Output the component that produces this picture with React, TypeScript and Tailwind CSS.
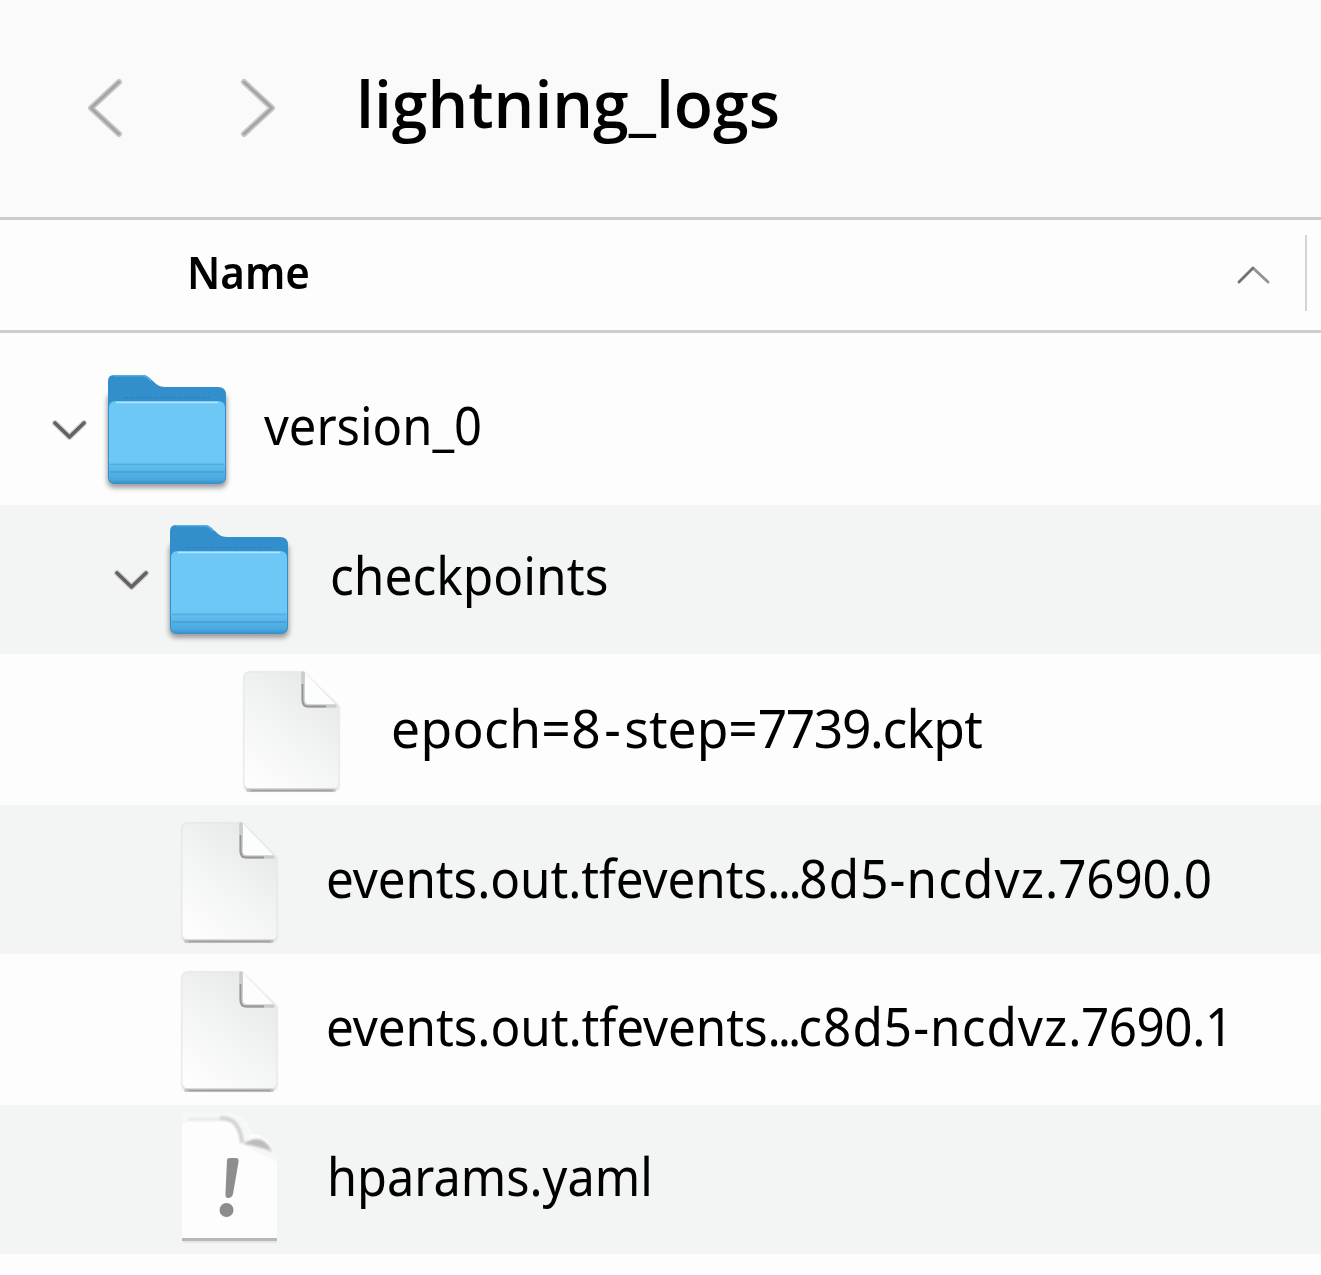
type Kind = "folder" | "file" | "yaml";
type Part = { text: string; spacing: string };

const rows: { parts: Part[]; kind: Kind; row: string; gap: string; label: string }[] = [
  { parts: [{ text: "version_0", spacing: "" }], kind: "folder", row: "h-[172px] pl-[52px] pt-[32px] bg-[#fdfdfd]", gap: "pl-[26px] pt-[30px]", label: "scale-x-[0.94]" },
  { parts: [{ text: "checkpoints", spacing: "" }], kind: "folder", row: "h-[149px] pl-[114px] pt-[10px] bg-[#f3f4f4]", gap: "pl-[30px] pt-[30px]", label: "scale-x-[0.954]" },
  {
    parts: [
      { text: "epoch=", spacing: "tracking-[0.4px]" },
      { text: "8-", spacing: "tracking-[3.6px]" },
      { text: "step=", spacing: "" },
      { text: "7739.", spacing: "tracking-[-1.4px]" },
      { text: "ckpt", spacing: "tracking-[-0.7px]" },
    ],
    kind: "file", row: "h-[151px] pl-[238px] pt-[10px] bg-[#fdfdfd]", gap: "pl-[43px] pt-[34px]", label: "scale-x-[0.99]",
  },
  {
    parts: [
      { text: "events.out.tfevents", spacing: "tracking-[-0.1px]" },
      { text: "...", spacing: "tracking-[-2.6px]" },
      { text: "8d5-ncdvz", spacing: "tracking-[1.2px]" },
      { text: ".7690.0", spacing: "tracking-[-0.1px]" },
    ],
    kind: "file", row: "h-[149px] pl-[176px] pt-[10px] bg-[#f3f4f4]", gap: "pl-[40px] pt-[33px]", label: "scale-x-[0.949]",
  },
  {
    parts: [
      { text: "events.out.tfevents", spacing: "tracking-[-0.1px]" },
      { text: "...", spacing: "tracking-[-3.1px]" },
      { text: "c8d5-ncdvz", spacing: "tracking-[1.1px]" },
      { text: ".7690.1", spacing: "tracking-[-0.5px]" },
    ],
    kind: "file", row: "h-[151px] pl-[176px] pt-[10px] bg-[#fdfdfd]", gap: "pl-[40px] pt-[32px]", label: "scale-x-[0.95]",
  },
  { parts: [{ text: "hparams.yaml", spacing: "" }], kind: "yaml", row: "h-[149px] pl-[176px] pt-[4px] bg-[#f3f4f4]", gap: "pl-[41px] pt-[37px]", label: "scale-x-[0.936]" },
];

function Disclosure() {
  return (
    <svg className="mt-[54px] h-[24px] w-[36px] shrink-0" viewBox="0 0 36 24" fill="none">
      <path d="M3 4 L17.5 18 L32 4" stroke="#b9b7b8" strokeWidth="6" strokeLinejoin="round" strokeLinecap="round" opacity="0.55" />
      <path d="M3 4 L17.5 18 L32 4" stroke="#646263" strokeWidth="3.8" strokeLinejoin="round" strokeLinecap="round" />
    </svg>
  );
}

function Folder() {
  return (
    <svg className="ml-[10px] h-[130px] w-[140px] shrink-0" viewBox="0 0 140 130">
      <defs>
        <linearGradient id="front" x1="0" y1="0" x2="0" y2="1">
          <stop offset="0" stopColor="#6dc8f6" />
          <stop offset="0.72" stopColor="#6dc8f6" />
          <stop offset="0.84" stopColor="#58b5e9" />
          <stop offset="0.94" stopColor="#4ca9df" />
          <stop offset="1" stopColor="#338fcb" />
        </linearGradient>
        <filter id="soft" x="-10%" y="-10%" width="120%" height="125%">
          <feGaussianBlur stdDeviation="2.4" />
        </filter>
      </defs>
      <rect x="9" y="28" width="120" height="95" rx="7" fill="#8b8888" opacity="0.8" filter="url(#soft)" />
      <path d="M10 16 Q10 10 16 10 H45 C53 10 56 22 67 22 H120 Q128 22 128 30 V112 Q128 119 120 119 H17 Q10 119 10 112 Z" fill="#338fcb" />
      <path d="M16 10.8 H45 C49 10.8 51 14 53 16" stroke="#55b1e4" strokeWidth="1.5" fill="none" />
      <path d="M26 32.5 H112" stroke="#2e719e" strokeWidth="1" strokeDasharray="1 2" />
      <path d="M11 43 Q11 36 18 36 H120 Q127 36 127 43 V112 Q127 119 119 119 H18 Q11 119 11 112 Z" fill="url(#front)" />
      <path d="M18 37.5 H120" stroke="#b4e3fa" strokeWidth="1.5" />
      <path d="M12 99.5 H126" stroke="#4ea9de" strokeWidth="1.5" opacity="0.8" />
      <path d="M12 107 H126" stroke="#459fd6" strokeWidth="2" opacity="0.75" />
    </svg>
  );
}

function FileIcon() {
  return (
    <svg className="h-[132px] w-[110px] shrink-0" viewBox="0 0 110 132">
      <defs>
        <linearGradient id="paper" x1="0.8" y1="0.1" x2="0.2" y2="1">
          <stop offset="0" stopColor="#e7e8e8" />
          <stop offset="0.5" stopColor="#f3f4f4" />
          <stop offset="1" stopColor="#fdfdfd" />
        </linearGradient>
        <filter id="fileShadow" x="-10%" y="-10%" width="120%" height="120%">
          <feGaussianBlur stdDeviation="1" />
        </filter>
      </defs>
      <path d="M12 8 H66 L101 43 V121 Q101 127 95 127 H12 Q6 127 6 121 V14 Q6 8 12 8" fill="#d8d8d8" filter="url(#fileShadow)" />
      <path d="M13 8 H65 L101 42 V119 Q101 125 94 125 H13 Q6 125 6 118 V15 Q6 8 13 8" fill="url(#paper)" stroke="#e6e7e7" strokeWidth="1" />
      <path d="M10 126.3 H96" stroke="#c4c3c4" strokeWidth="3.4" strokeLinecap="round" />
      <path d="M13 126.5 H94" stroke="#a09e9f" strokeWidth="1.4" strokeLinecap="round" />
      <path d="M67 9 L99 42 H71 Q66 42 66 36 Z" fill="#fcfdfd" />
      <path d="M65 9 V36 Q65 42 71 42 H97" fill="none" stroke="#cbcbcb" strokeWidth="3.6" strokeLinecap="round" />
      <path d="M64.500 20 V36 Q64.500 42.500 70 42.500 H88" fill="none" stroke="#969495" strokeWidth="1.8" />
    </svg>
  );
}

function YamlIcon() {
  return (
    <svg className="h-[140px] w-[110px] shrink-0" viewBox="0 0 110 140">
      <defs>
        <filter id="fold" x="-20%" y="-20%" width="140%" height="140%">
          <feGaussianBlur stdDeviation="1.2" />
        </filter>
      </defs>
      <path d="M6 4 H56 C68 6 74 15 78 26 L101 46 V131 H6 Z" fill="#f6f7f7" />
      <path d="M6 17 Q8 13 16 13 H50 C62 14 62 29 70 36 Q76 42 101 53 V129 H6 Z" fill="#fdfdfd" />
      <path d="M74 26 C82 24 92 28 97 40 C90 31 82 30 71 33 Z" fill="#fdfdfd" />
      <g filter="url(#fold)">
        <path d="M12 10 H44" fill="none" stroke="#e4e5e5" strokeWidth="2" />
        <path d="M44 9 Q57 9 61 17 Q65 23 66 34" fill="none" stroke="#d2d2d2" strokeWidth="4" />
        <path d="M67 35 Q87 22 96 43 Q87 38 67 35" fill="#bdbcbd" />
      </g>
      <path d="M51 51 Q51 49 54 49 H60 Q63 49 62.500 53 L57 85 Q56 89 52 89 Q49 89 49.500 84 Z" fill="#8f8d8e" />
      <circle cx="50.500" cy="101" r="7" fill="#8d8b8c" />
      <path d="M6 130.500 H101" stroke="#b9b8b9" strokeWidth="3" />
      <path d="M7 133 H101" stroke="#dfe0e0" strokeWidth="1.500" />
    </svg>
  );
}

export default function App() {
  return (
    <div className="flex h-[1275px] w-full flex-col overflow-hidden bg-[#fdfdfd] font-['Noto_Sans',sans-serif] text-black">
      <header className="flex h-[217px] shrink-0 items-start bg-[#fafafa] pl-[84px] pt-[76px]">
        <svg className="h-[64px] w-[42px]" viewBox="0 0 42 64" fill="none" strokeLinecap="round" strokeLinejoin="round">
          <path d="M35 6 L7 32 L35 58" stroke="#c8c7c8" strokeWidth="6" />
          <path d="M35 6 L7 32 L35 58" stroke="#a4a2a3" strokeWidth="2.5" />
        </svg>
        <svg className="ml-[111px] h-[64px] w-[42px]" viewBox="0 0 42 64" fill="none" strokeLinecap="round" strokeLinejoin="round">
          <path d="M7 6 L35 32 L7 58" stroke="#c8c7c8" strokeWidth="6" />
          <path d="M7 6 L35 32 L7 58" stroke="#a4a2a3" strokeWidth="2.5" />
        </svg>
        <h1 className="-mt-[14px] ml-[77px] origin-left scale-x-[0.973] whitespace-nowrap font-['Open_Sans',sans-serif] text-[66px] font-semibold leading-[80px]">
          lightning_logs
        </h1>
      </header>
      <div className="h-[3px] shrink-0 bg-[#cccccc]" />
      <div className="flex h-[110px] shrink-0 items-start justify-between pl-[187px] pr-[14px]">
        <h2 className="mt-[22px] origin-left scale-x-[0.935] whitespace-nowrap text-[45px] font-semibold leading-[60px]">Name</h2>
        <div className="flex">
          <svg className="mt-[42px] h-[26px] w-[40px]" viewBox="0 0 40 26" fill="none" strokeLinecap="round" strokeLinejoin="round">
            <path d="M6 20 L20 6 L35 20" stroke="#969495" strokeWidth="3" />
            <path d="M6 20 L20 6" stroke="#706e6f" strokeWidth="2.200" />
          </svg>
          <div className="ml-[32px] mt-[15px] h-[76px] w-[2px] bg-[#d4d4d4]" />
        </div>
      </div>
      <div className="h-[3px] shrink-0 bg-[#cdcdcd]" />
      <main className="flex flex-col">
        {rows.map((r, i) => (
          <div key={i} className={`flex shrink-0 items-start ${r.row}`}>
            {r.kind === "folder" && <Disclosure />}
            {r.kind === "folder" ? <Folder /> : r.kind === "file" ? <FileIcon /> : <YamlIcon />}
            <div className={r.gap}>
              <div className={`origin-left whitespace-nowrap text-[52px] leading-[60px] ${r.label}`}>
                {r.parts.map((p) => (
                  <span key={p.text} className={p.spacing}>{p.text}</span>
                ))}
              </div>
            </div>
          </div>
        ))}
      </main>
    </div>
  );
}
